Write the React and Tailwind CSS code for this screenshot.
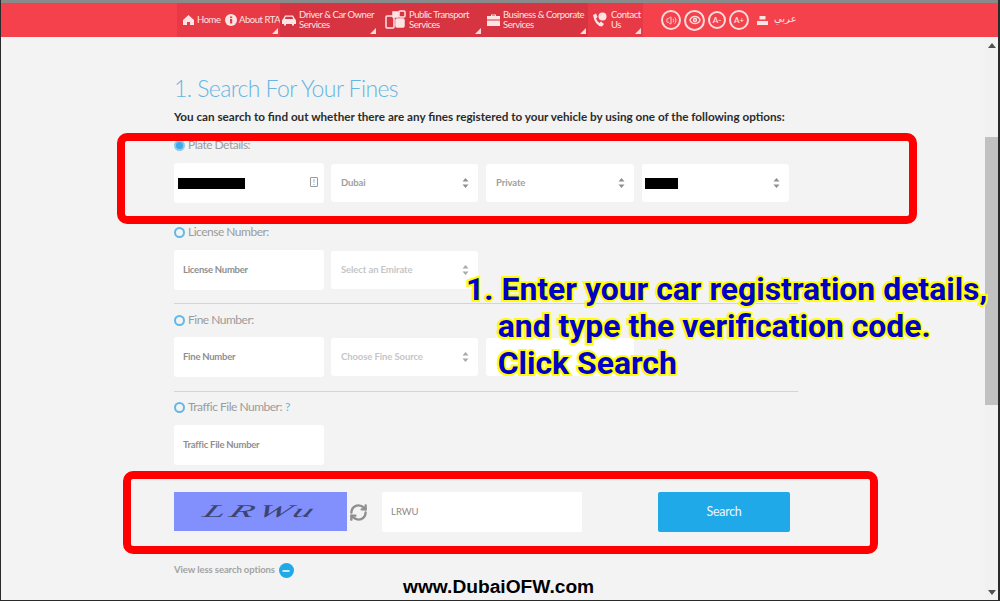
import React from "react";
import { RefreshCw, Volume2, Eye, Minus } from "lucide-react";

function Corner() {
    return <span className="absolute right-[2px] bottom-[3px] w-0 h-0 border-l-[6px] border-l-transparent border-b-[6px] border-b-[#f6dcdc]" />;
}

function NavItem({ icon, label, width, bg = "", pad, gap = "gap-[3px]", corner }) {
    return (
        <div className={`relative flex items-center h-full shrink-0 ${gap} ${pad} ${width} ${bg}`}>
            <span className="shrink-0 flex">{icon}</span>
            <span className="text-[9.5px] tracking-[-0.45px] leading-[10.5px] text-[#fbe4e4] whitespace-pre">{label}</span>
            {corner && <Corner />}
        </div>
    );
}

function Circle({ size, children }) {
    return (
        <span className={`flex items-center justify-center rounded-full border-2 border-[#fbdcdc] text-[8px] font-bold text-[#fbdcdc] ${size}`}>
            {children}
        </span>
    );
}

function Arrows({ light }) {
    return (
        <svg width="7" height="11" viewBox="0 0 7 11" className="absolute right-[9px] top-1/2 -translate-y-1/2">
            <path d="M3.5 0.5 L6.5 4 H0.5 Z M3.5 10.5 L6.5 7 H0.5 Z" fill={light ? "#a9a9a9" : "#8f8f8f"} />
        </svg>
    );
}

function Field({ label, redact, extra }) {
    return (
        <div className="relative flex items-center bg-white rounded-[3px] shrink-0 w-[150px] h-[40px]">
            {label && <span className="pl-[9px] text-[9.5px] tracking-[-0.25px] font-bold text-[#8f8f8f]">{label}</span>}
            {redact && <span className={`ml-[4px] bg-black ${redact}`} />}
            {extra}
        </div>
    );
}

function Select({ width, label, muted, redact, noArrows }) {
    return (
        <div className={`relative flex items-center bg-white rounded-[3px] shrink-0 h-[38px] ${width}`}>
            {label && <span className={`pl-[10px] text-[9.5px] tracking-[-0.1px] font-bold ${muted ? "text-[#c6c6c6]" : "text-[#a0a0a0]"}`}>{label}</span>}
            {redact && <span className="ml-[3px] w-[33px] h-[11px] bg-black" />}
            {!noArrows && <Arrows light={muted} />}
        </div>
    );
}

function RadioLabel({ checked, children, className = "" }) {
    return (
        <div className={`flex items-center gap-[3px] text-[12px] tracking-[-0.5px] leading-[14px] text-[#9b9b9b] ${className}`}>
            <span className={`w-[11px] h-[11px] rounded-full border-2 ${checked ? "border-[#8cc9ec] bg-[#3fa9ea]" : "border-[#62b8e6]"}`} />
            {children}
        </div>
    );
}

export default function App() {
    return (
        <div className="relative w-[1000px] h-[601px] overflow-hidden flex flex-col bg-[#f3f3f3] border-l border-r-2 border-b border-[#2a2a2a] [font-family:Lato,sans-serif]">
            <div className="h-[3px] bg-[#8a8a8a] shrink-0" />
            {/* Красная шапка */}
            <div className="h-[34px] shrink-0 bg-[#f4414c] flex items-center pl-[176px]">
                <NavItem width="w-[45px]" pad="pl-[6px]" bg="bg-[#e83a46]" icon={
                    <svg width="11" height="10" viewBox="0 0 11 10" fill="#fbe4e4">
                        <path d="M5.5 0 L11 5 V10 H7 V7 H4 V10 H0 V5 Z" />
                    </svg>
                } label="Home" />
                <NavItem width="w-[58px]" pad="pl-[3px]" gap="gap-[2px]" bg="bg-[#e83a46]" icon={
                    <svg width="12" height="12" viewBox="0 0 12 12">
                        <circle cx="6" cy="6" r="6" fill="#fbe4e4" />
                        <rect x="5" y="5" width="2.2" height="4.5" fill="#e83a46" />
                        <rect x="5" y="2.5" width="2.2" height="1.6" fill="#e83a46" />
                    </svg>
                } label="About RTA" corner />
                <NavItem width="w-[98px]" pad="pl-[2px]" bg="bg-[#d63441]" icon={
                    <svg width="14" height="11" viewBox="0 0 14 11" fill="#fbe4e4">
                        <path d="M3 0.5 H11 L13 4 Q14 4.5 14 6 V9 H12 V10.5 H10 V9 H4 V10.5 H2 V9 H0 V6 Q0 4.5 1 4 Z M3.8 1.8 L2.8 4 H11.2 L10.2 1.8 Z" fillRule="evenodd" />
                    </svg>
                } label={"Driver & Car Owner\nServices"} corner />
                <NavItem width="w-[105px]" pad="pl-[7px]" bg="bg-[#d63441]" icon={
                    <svg width="21" height="20" viewBox="0 0 21 20" fill="none" stroke="#fbe4e4" strokeWidth="1.5">
                        <rect x="1" y="6" width="8" height="12" rx="1" />
                        <rect x="8" y="2" width="5" height="5" fill="#fbe4e4" />
                        <rect x="14" y="1" width="6" height="6" rx="1" />
                        <rect x="11" y="9" width="8" height="8" rx="1" fill="#fbe4e4" />
                    </svg>
                } label={"Public Transport\nServices"} corner />
                <NavItem width="w-[105px]" pad="pl-[4px]" bg="bg-[#d63441]" icon={
                    <svg width="13" height="12" viewBox="0 0 13 12" fill="#fbe4e4">
                        <path d="M4 2 V0.5 H9 V2 H13 V5.5 H0 V2 Z M5 2 H8 V1.5 H5 Z" fillRule="evenodd" />
                        <path d="M0 6.5 H13 V12 H0 Z" />
                    </svg>
                } label={"Business & Corporate\nServices"} corner />
                <NavItem width="w-[55px]" pad="pl-[4px]" gap="gap-[4px]" bg="bg-[#e83a46]" icon={
                    <svg width="15" height="16" viewBox="0 0 15 16" fill="#fbe4e4">
                        <path d="M1 3 L4 1.5 L5.5 5 L4 6.5 Q5 9.5 7.5 11 L9 9.5 L12 12 L10 14.5 Q3 14 1 3 Z" />
                        <circle cx="10.5" cy="4.5" r="4" />
                    </svg>
                } label={"Contact\nUs"} corner />
                <div className="flex items-center gap-[3px] ml-[18px]">
                    <Circle size="w-[20px] h-[20px]"><Volume2 size={11} /></Circle>
                    <Circle size="w-[21px] h-[21px]"><Eye size={12} strokeWidth={3} /></Circle>
                    <Circle size="w-[18px] h-[18px]">A-</Circle>
                    <Circle size="w-[20px] h-[20px]">A+</Circle>
                </div>
                <svg width="11" height="9" viewBox="0 0 11 9" className="ml-[8px]" fill="#fbe4e4">
                    <rect x="2.5" y="0" width="6" height="3.5" />
                    <rect x="0" y="5" width="11" height="4" />
                </svg>
                <span className="ml-[6px] mb-[4px] text-[10px] text-[#fbe4e4] [font-family:'DejaVu_Sans',sans-serif]">عربي</span>
            </div>

            <div className="flex flex-1 min-h-0">
                <main className="flex-1 pl-[173px]">
                    <h1 className="mt-[36px] text-[23px] tracking-[-0.6px] leading-[30px] font-light text-[#66b5e2]">1. Search For Your Fines</h1>
                    <p className="mt-[5px] text-[11.7px] leading-[16px] font-bold text-[#2b2b2b] whitespace-nowrap">
                        You can search to find out whether there are any fines registered to your vehicle by using one of the following options:
                    </p>

                    <RadioLabel checked className="mt-[14px]">Plate Details:</RadioLabel>
                    <div className="flex items-center gap-[7px] mt-[11px]">
                        <Field redact="w-[67px] h-[11px]" extra={
                            <span className="absolute right-[6px] top-[14px] w-[8px] h-[10px] border border-[#999] rounded-[1px] text-[7px] leading-[8px] text-center text-[#777]">!</span>
                        } />
                        <Select width="w-[147px]" label="Dubai" />
                        <Select width="w-[148px] ml-[1px]" label="Private" />
                        <Select width="w-[147px] ml-[1px]" redact />
                    </div>

                    <RadioLabel className="mt-[22px]">License Number:</RadioLabel>
                    <div className="flex items-center gap-[7px] mt-[11px]">
                        <Field label="License Number" />
                        <Select width="w-[147px]" label="Select an Emirate" muted />
                    </div>
                    <div className="w-[624px] h-px bg-[#d4d4d4] mt-[13px]" />

                    <RadioLabel className="mt-[9px]">Fine Number:</RadioLabel>
                    <div className="flex items-center gap-[7px] mt-[10px]">
                        <Field label="Fine Number" />
                        <Select width="w-[147px]" label="Choose Fine Source" muted />
                        <Select width="w-[148px] ml-[1px]" noArrows />
                    </div>
                    <div className="w-[624px] h-px bg-[#d4d4d4] mt-[14px]" />

                    <RadioLabel className="mt-[8px]">
                        Traffic File Number: <span className="text-[#66b5e2]">?</span>
                    </RadioLabel>
                    <div className="mt-[11px]">
                        <Field label="Traffic File Number" />
                    </div>

                    <div className="flex items-start mt-[27px]">
                        {/* Капча */}
                        <div className="w-[173px] h-[39px] bg-[#8190fd] flex items-center justify-center overflow-hidden">
                            <span className="italic text-[18px] tracking-[2px] text-[#3d4470] scale-x-[2.2] -skew-x-12 [font-family:'Liberation_Serif',serif]">LRWu</span>
                        </div>
                        <RefreshCw size={19} color="#8f8f8f" strokeWidth={3} className="mx-[2px] self-center" />
                        <div className="ml-[12px] w-[200px] h-[40px] bg-white rounded-[2px] flex items-center pl-[9px] text-[9.5px] text-[#8a8a8a]">LRWU</div>
                        <button className="ml-[76px] w-[132px] h-[40px] pt-[1px] bg-[#1fa9e8] rounded-[2px] text-[12.5px] tracking-[-0.3px] text-[#eaf6fc]">Search</button>
                    </div>

                    <div className="flex items-center gap-[4px] mt-[31px] text-[9.5px] tracking-[-0.1px] font-bold text-[#a3a3a3]">
                        View less search options
                        <span className="w-[15px] h-[15px] rounded-full bg-[#1fa9e8] flex items-center justify-center">
                            <Minus size={10} color="white" strokeWidth={4} />
                        </span>
                    </div>
                </main>

                {/* Полоса прокрутки */}
                <aside className="w-[13px] shrink-0 bg-[#f1f1f1] relative">
                    <span className="absolute top-[6px] left-[3px] w-0 h-0 border-x-[4px] border-x-transparent border-b-[5px] border-b-[#505050]" />
                    <div className="mt-[100px] h-[268px] bg-[#c1c1c1]" />
                    <span className="absolute bottom-[5px] left-[3px] w-0 h-0 border-x-[4px] border-x-transparent border-t-[5px] border-t-[#505050]" />
                </aside>
            </div>

            {/* Пометки поверх скриншота */}
            <div className="absolute left-[116px] top-[133px] w-[800px] h-[91px] border-[8px] border-[#ff0000] rounded-[10px]" />
            <div className="absolute left-[122px] top-[471px] w-[755px] h-[83px] border-[8px] border-[#ff0000] rounded-[10px]" />
            <div className="absolute left-[465px] top-[271px] text-[31.9px] leading-[37px] font-bold text-[#0000c8] whitespace-pre [font-family:Roboto,sans-serif] [-webkit-text-stroke:4px_#ffff00] [paint-order:stroke_fill]">
                {"1. Enter your car registration details,\n    and type the verification code.\n    Click Search"}
            </div>
            <div className="absolute left-[402px] top-[576px] text-[19.2px] leading-[22px] font-bold text-black [font-family:'Liberation_Sans',sans-serif]">www.DubaiOFW.com</div>
        </div>
    );
}
